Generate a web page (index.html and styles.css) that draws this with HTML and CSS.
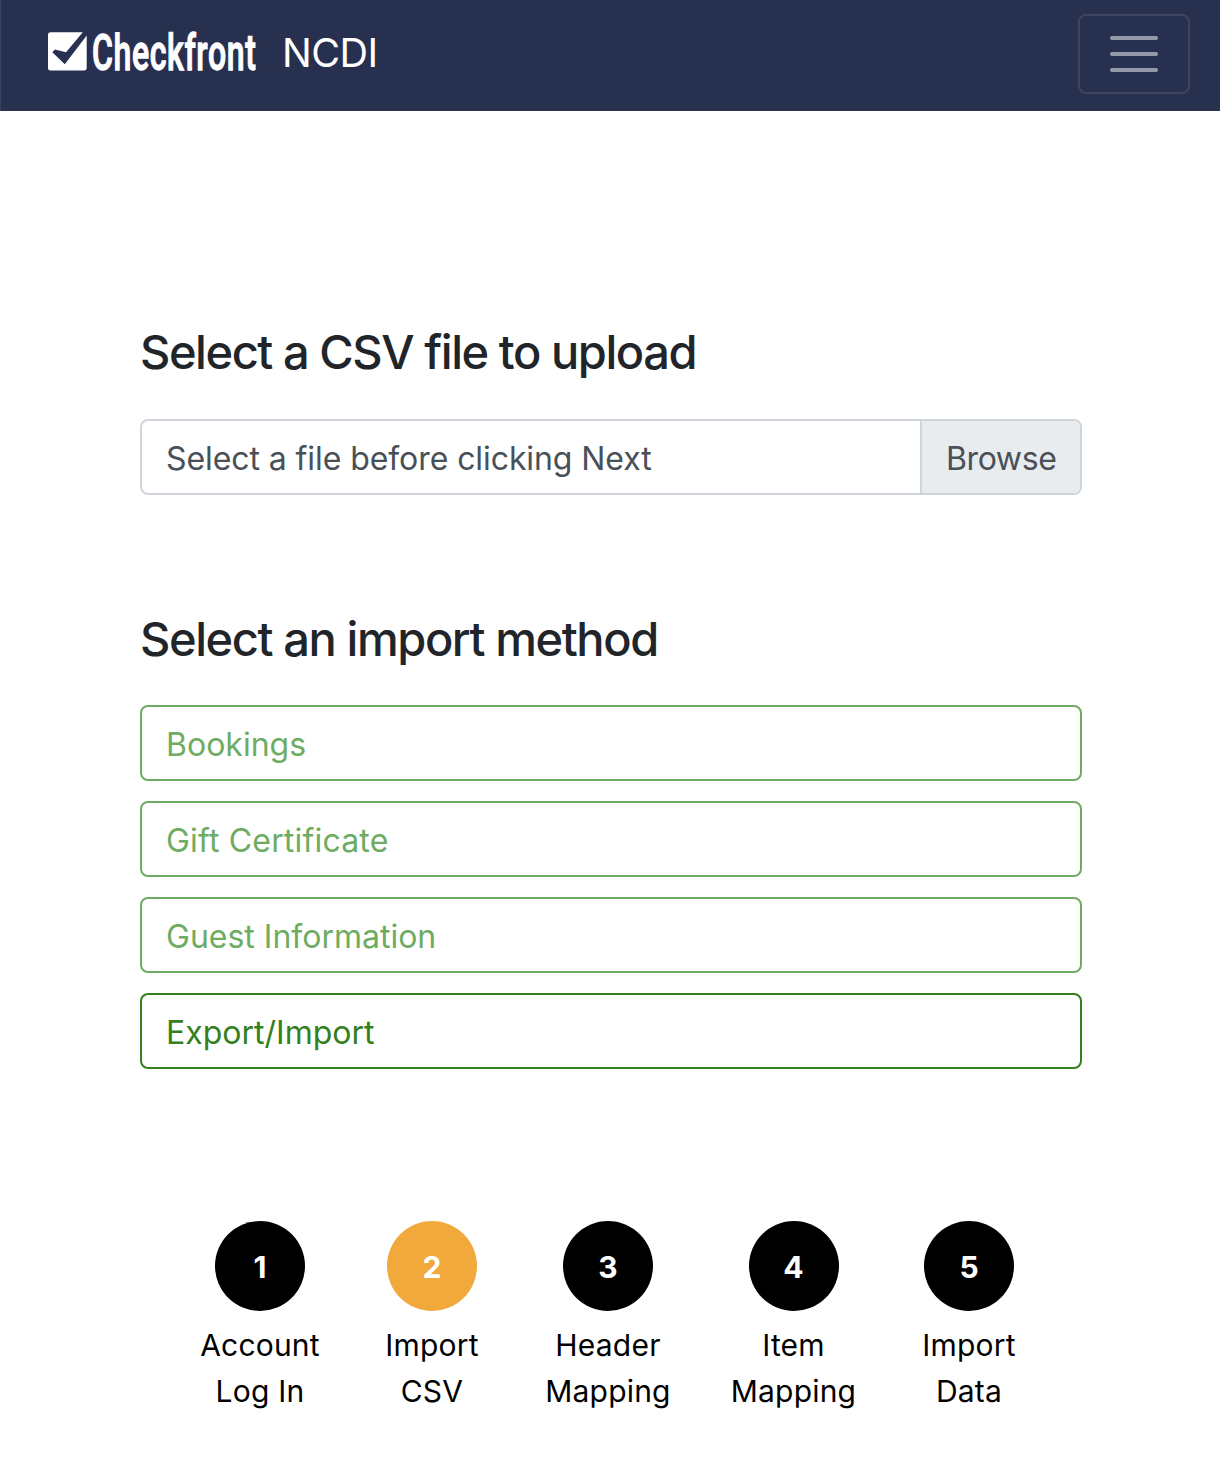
FILE: index.html
```html
<!DOCTYPE html>
<html lang="en">
<head>
<meta charset="utf-8">
<title>Checkfront NCDI</title>
<link rel="stylesheet" href="styles.css">
</head>
<body>
<header class="navbar">
  <a class="brand">
    <svg class="logo" width="214" height="66" viewBox="0 -10 214 66" role="img" aria-label="Checkfront">
      <path fill="#fff" fill-rule="evenodd" d="M2.500 4.300H34.800L18 24.300L7 21.500L4.300 24.300L16.800 36.300L38.700 7.500V39.500Q38.700 42.500 36.200 42.500H2.500Q0 42.500 0 40V6.800Q0 4.300 2.500 4.300Z"/>
      <text class="wordmark" transform="translate(44 41.500) scale(.64 1)" x="0" y="0" textLength="256">Checkfront</text>
    </svg>
    <span class="brand-name">NCDI</span>
  </a>
  <button class="toggler" aria-label="Toggle navigation">
    <svg width="60" height="60" viewBox="0 0 30 30"><path stroke="rgba(255,255,255,.5)" stroke-width="2" stroke-linecap="round" d="M4 7h22M4 15h22M4 23h22"/></svg>
  </button>
</header>
<main class="content">
  <h1 class="heading heading-file">Select a CSV file to upload</h1>
  <label class="file">
    <span class="file-name">Select a file before clicking Next</span>
    <span class="file-browse">Browse</span>
  </label>
  <h2 class="heading heading-method">Select an import method</h2>
  <div class="methods">
    <button class="method">Bookings</button>
    <button class="method spaced">Gift Certificate</button>
    <button class="method">Guest Information</button>
    <button class="method active">Export/Import</button>
  </div>
</main>
<ol class="steps">
  <li class="step"><span class="dot">1</span><span class="label">Account<br>Log In</span></li>
  <li class="step current"><span class="dot">2</span><span class="label">Import<br>CSV</span></li>
  <li class="step"><span class="dot">3</span><span class="label">Header<br>Mapping</span></li>
  <li class="step"><span class="dot">4</span><span class="label">Item<br>Mapping</span></li>
  <li class="step"><span class="dot">5</span><span class="label">Import<br>Data</span></li>
</ol>
</body>
</html>
```
FILE: styles.css
```css
* { box-sizing: border-box; }
body { margin: 0; background: #fff; color: #212529; font: 400 32px/48px Inter, "Liberation Sans", sans-serif; }
button { font: inherit; letter-spacing: inherit; background: none; }
.navbar { display: flex; justify-content: space-between; align-items: flex-start; height: 111px; padding: 14px 30px 0 47px; background: #283050; border-left: 1px solid #3b4363; }
.brand { display: flex; align-items: flex-start; gap: 20px; padding-top: 4px; color: #fff; }
.logo { display: block; }
.wordmark { font: 500 50px Roboto, sans-serif; fill: #fff; stroke: #fff; stroke-width: 1.3px; }
.brand-name { padding-top: 10px; font-size: 39.5px; font-weight: 400; line-height: 51px; letter-spacing: -0.5px; }
.toggler { display: flex; align-items: center; justify-content: center; width: 112px; height: 80px; padding: 0; border: 2px solid #3d4561; border-radius: 8px; }
.content { width: 942px; margin: 0 0 0 140px; }
.heading { margin: 0; font-size: 47px; line-height: 58px; font-weight: 500; letter-spacing: -1.44px; }
.heading-file { padding-top: 212px; }
.heading-method { margin-top: 115px; letter-spacing: -1.41px; }
.file { display: flex; height: 76px; margin-top: 38px; border: 2px solid #ced4da; border-radius: 8px; color: #495057; line-height: 75px; overflow: hidden; }
.file-name { flex: 1; padding-left: 24px; letter-spacing: -0.08px; }
.file-browse { width: 160px; padding-left: 24px; border-left: 2px solid #ced4da; background: #e9ecef; letter-spacing: -0.4px; }
.methods { display: flex; flex-direction: column; gap: 20px; margin-top: 37px; }
.method { height: 76px; padding: 3px 24px 0; border: 2px solid #6eac62; border-radius: 8px; color: #6eac62; text-align: left; }
.method.spaced { letter-spacing: 0.18px; }
.method.active { border-color: #34801e; color: #34801e; }
.steps { display: grid; grid-template-columns: 170px 174px 178px 193px 158px; margin: 152px 0 0 175px; padding: 0; list-style: none; color: #000; }
.step { display: flex; flex-direction: column; align-items: center; text-align: center; }
.dot { width: 90px; height: 90px; border-radius: 50%; background: #000; color: #fff; font-size: 30px; font-weight: 700; line-height: 93px; }
.current .dot { background: #f1a93c; }
.label { margin-top: 11px; font-size: 30px; line-height: 46px; letter-spacing: 0.2px; }
```
